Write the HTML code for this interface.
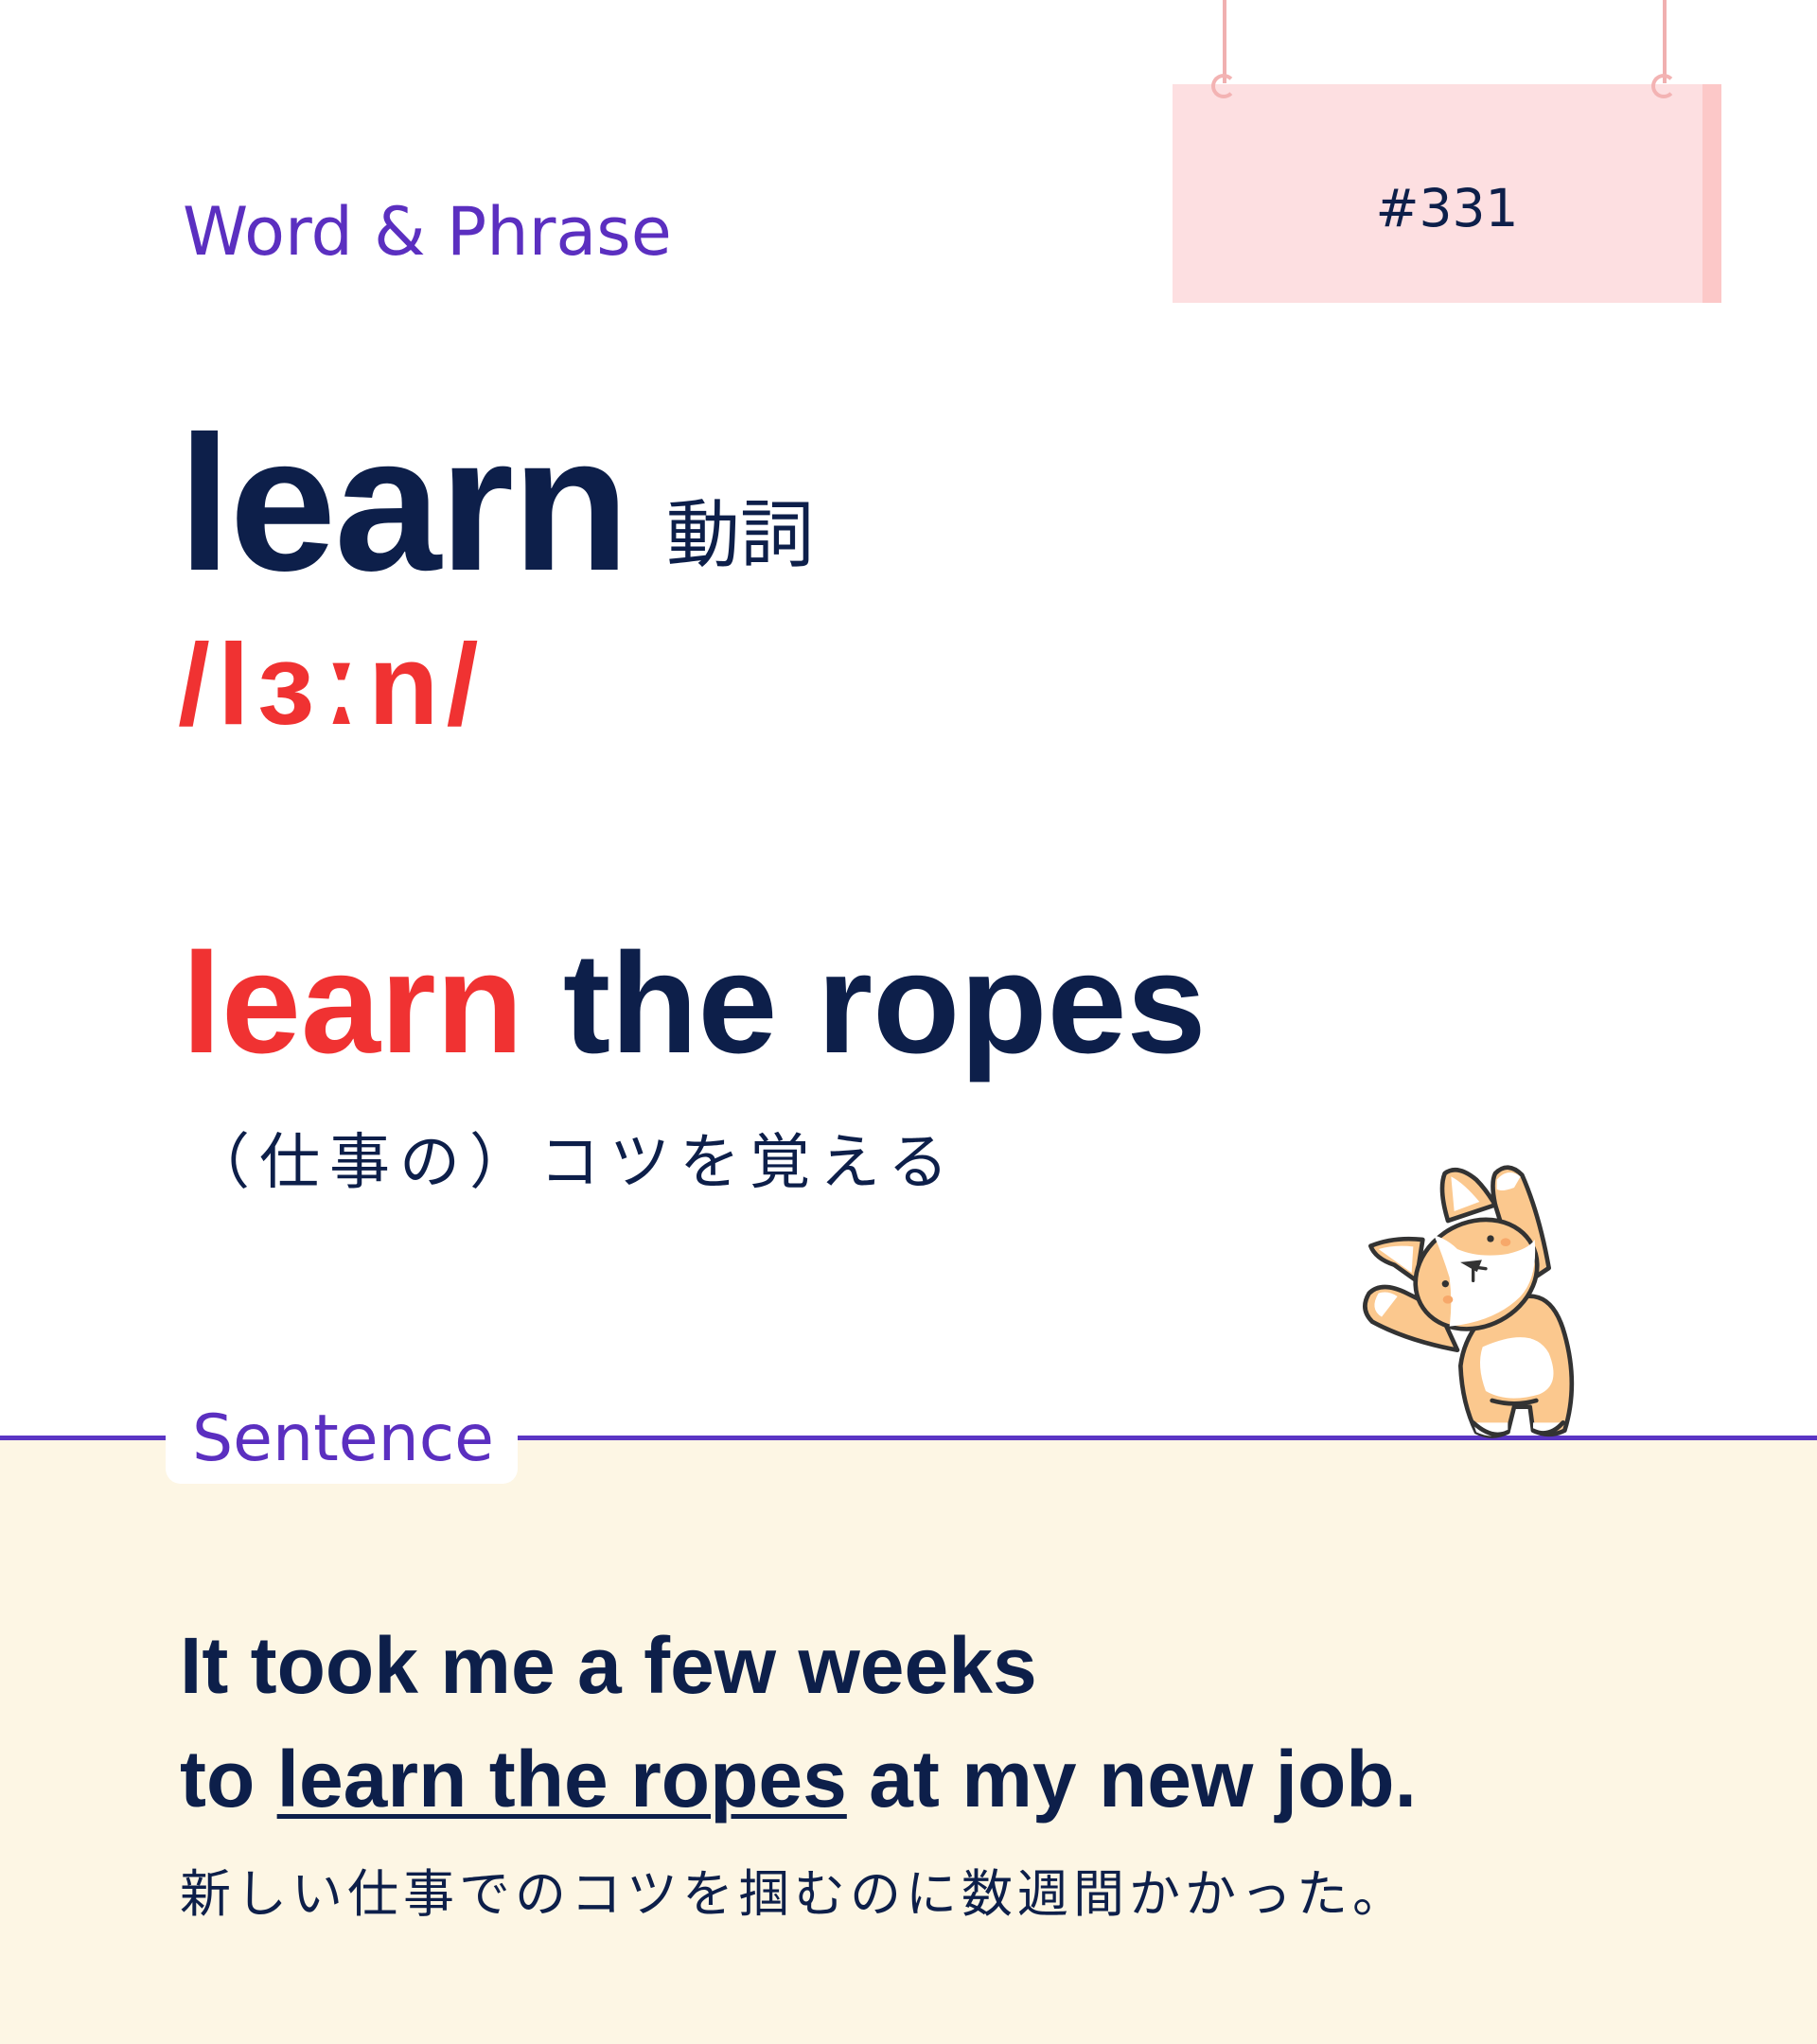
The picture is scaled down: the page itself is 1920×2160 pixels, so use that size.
<!DOCTYPE html>
<html><head><meta charset="utf-8"><style>
*{margin:0;padding:0;box-sizing:border-box}
body{width:1920px;height:2160px;position:relative;background:#fff;overflow:hidden;font-family:"Liberation Sans","Noto Sans CJK JP",sans-serif;color:#0d1f4a}
.a{position:absolute;white-space:nowrap}
</style></head><body>
<div class="a" style="left:0;top:1519px;width:1920px;height:641px;background:#fdf6e4"></div>
<div class="a" style="left:0;top:1517px;width:1920px;height:5px;background:#5b35c4"></div>
<div class="a" style="left:175px;top:1481px;width:372px;height:87px;background:#fff;border-radius:16px"></div>
<div class="a" style="left:203px;top:1476px;font-size:68px;line-height:90px;color:#5b2fc0;font-family:'DejaVu Sans','Liberation Sans',sans-serif">Sentence</div>

<div class="a" style="left:193px;top:200px;font-size:70px;line-height:90px;color:#5b2fc0;font-family:'DejaVu Sans','Liberation Sans',sans-serif">Word &amp; Phrase</div>

<div class="a" style="left:1292px;top:0;width:4px;height:88px;background:#f0b0b0"></div>
<div class="a" style="left:1757px;top:0;width:4px;height:88px;background:#f0b0b0"></div>
<div class="a" style="left:1239px;top:89px;width:580px;height:231px;background:#fddfe1"></div>
<div class="a" style="left:1799px;top:89px;width:20px;height:231px;background:#fcc8c8"></div>
<div class="a" style="left:1280px;top:78px;width:26px;height:26px;border:4px solid #f3b3b3;border-radius:50%;border-right-color:transparent"></div>
<div class="a" style="left:1745px;top:78px;width:26px;height:26px;border:4px solid #f3b3b3;border-radius:50%;border-right-color:transparent"></div>
<div class="a" style="left:1239px;top:180px;width:580px;text-align:center;font-size:55px;line-height:80px;font-family:'DejaVu Sans','Liberation Sans',sans-serif">#331</div>

<div class="a" style="left:188px;top:418px;font-size:203px;line-height:230px;font-weight:bold;letter-spacing:-2px">learn</div>
<div class="a" style="left:704px;top:514px;font-size:78px;line-height:90px;font-family:'Noto Sans CJK JP',sans-serif">動詞</div>
<div class="a" style="left:188px;top:653px;font-size:122px;line-height:140px;font-weight:bold;color:#f03232;letter-spacing:8px">/lɜːn/</div>

<div class="a" style="left:192px;top:975px;font-size:151px;line-height:170px;font-weight:bold"><span style="color:#f03232">learn</span> the ropes</div>
<div class="a" style="left:200px;top:1180px;font-size:64px;line-height:86px;letter-spacing:10px;font-family:'Noto Sans CJK JP',sans-serif">（仕事の）コツを覚える</div>

<div class="a" style="left:190px;top:1710px;font-size:84px;line-height:100px;font-weight:bold">It took me a few weeks</div>
<div class="a" style="left:190px;top:1830px;font-size:84px;line-height:100px;font-weight:bold">to <span style="text-decoration:underline;text-decoration-thickness:5px;text-underline-offset:8px">learn the ropes</span> at my new job.</div>
<div class="a" style="left:190px;top:1962px;font-size:54px;line-height:70px;letter-spacing:5px;font-family:'Noto Sans CJK JP',sans-serif">新しい仕事でのコツを掴むのに数週間かかった。</div>

<svg class="a" style="left:1420px;top:1210px" width="260" height="320" viewBox="0 0 780 960">
<g stroke="#333" stroke-width="14" stroke-linejoin="round" stroke-linecap="round">
<path d="M480 190 Q465 120 480 90 Q520 50 565 95 Q620 220 650 390 L560 450Z" fill="#fbc88e"/>
<path d="M430 560 Q640 380 700 600 Q745 760 700 905 Q650 930 600 905 L590 830 L540 830 L520 910 Q470 935 420 910 Q375 820 370 700 Q380 620 430 560Z" fill="#fbc88e"/>
<path d="M360 650 Q200 620 90 560 Q50 520 80 470 Q120 430 200 470 L300 520Z" fill="#fbc88e"/>
<path d="M330 240 Q300 140 320 90 Q360 60 420 110 Q450 140 480 190Z" fill="#fbc88e"/>
<path d="M250 300 Q160 290 85 320 Q100 360 160 380 L230 430Z" fill="#fbc88e"/>
<ellipse cx="420" cy="410" rx="200" ry="165" transform="rotate(-28 420 410)" fill="#fbc88e"/>
</g>
<path d="M285 285 Q330 300 360 330 Q430 360 520 345 Q585 330 605 300 Q615 420 560 480 Q480 560 335 575 Q345 500 335 420 Q310 340 285 285Z" fill="#fff"/>
<path d="M440 640 Q600 570 650 660 Q690 760 620 790 Q520 820 450 780 Q420 700 440 640Z" fill="#fff"/>
<path d="M110 470 Q140 460 170 480 L120 545 Q80 520 110 470Z" fill="#fff"/>
<path d="M485 110 Q520 70 560 100 L540 135 Q500 150 485 140Z" fill="#fff"/>
<path d="M340 100 Q380 120 430 180 L350 210Z" fill="#fff"/>
<path d="M110 330 Q160 315 220 322 L215 405Z" fill="#fff"/>
<path d="M410 880 L520 880 L520 910 Q470 935 420 910Z M600 880 L695 880 Q660 930 600 905Z" fill="#fff"/>
<g stroke="#333" stroke-width="14" fill="none" stroke-linecap="round">
<path d="M470 810 Q540 830 610 810"/>
<path d="M410 880 Q470 935 520 910 M600 905 Q650 930 695 880"/>
</g>
<circle cx="465" cy="297" r="11" fill="#333"/><circle cx="322" cy="440" r="11" fill="#333"/>
<ellipse cx="513" cy="308" rx="16" ry="13" fill="#f7a86a"/><ellipse cx="330" cy="490" rx="16" ry="13" fill="#f7a86a"/>
<path d="M385 375 L430 370 L420 395 Z M410 390 L410 430 M420 388 L450 392" stroke="#333" stroke-width="10" fill="#333" stroke-linecap="round"/>
</svg>
</body></html>
